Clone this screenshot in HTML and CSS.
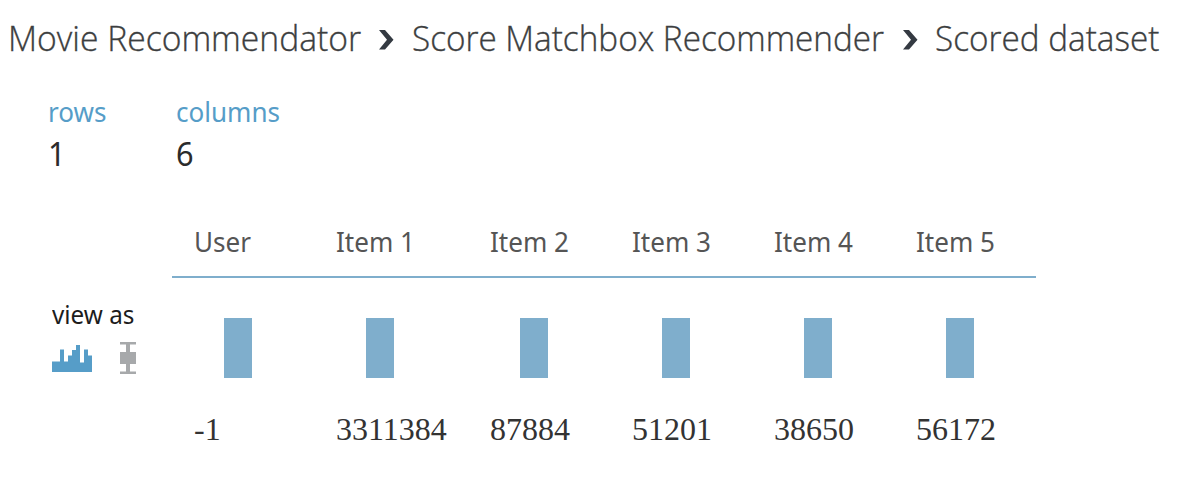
FILE: index.html
```html
<!DOCTYPE html>
<html lang="en">
<head>
<meta charset="utf-8">
<title>Scored dataset</title>
<link rel="stylesheet" href="styles.css">
</head>
<body>
<nav class="crumbs">
  <span class="crumb crumb-project"><span class="fit fit-project">Movie Recommendator</span></span>
  <svg class="chevron" viewBox="0 0 16 22"><path d="M0 1H6L14.500 10.700L6 20.500H0L8 10.700Z"/></svg>
  <span class="crumb crumb-module"><span class="fit">Score Matchbox Recommender</span></span>
  <svg class="chevron" viewBox="0 0 16 22"><path d="M0 1H6L14.500 10.700L6 20.500H0L8 10.700Z"/></svg>
  <span class="crumb"><span class="fit">Scored dataset</span></span>
</nav>
<section class="summary">
  <div class="stat"><div class="stat-label">rows</div><div class="stat-value">1</div></div>
  <div class="stat"><div class="stat-label">columns</div><div class="stat-value">6</div></div>
</section>
<main class="data">
  <aside class="view">
    <div class="view-label">view as</div>
    <div class="view-icons">
      <svg class="histogram" viewBox="0 0 40 28"><path d="M0 28V17.500H8V5.500H12V17.500H16V11.500H20V6H24V1H28V18.500H32V5.500H36V11.500H40V28Z"/></svg>
      <svg class="boxplot" viewBox="0 0 18 34"><path d="M1 1H17V3.500H11V11H17V23H11V30.500H17V33H1V30.500H7V23H1V11H7V3.500H1Z"/></svg>
    </div>
  </aside>
  <div class="table">
    <div class="row head"><span>User</span><span>Item 1</span><span>Item 2</span><span>Item 3</span><span>Item 4</span><span>Item 5</span></div>
    <div class="row bars"><i></i><i></i><i></i><i></i><i></i><i></i></div>
    <div class="row values"><span>-1</span><span>3311384</span><span>87884</span><span>51201</span><span>38650</span><span>56172</span></div>
  </div>
</main>
</body>
</html>
```
FILE: styles.css
```css
body { margin: 0; background: #fff; font-family: "Noto Sans", "Open Sans", sans-serif; color: #333; }
.crumbs { display: flex; align-items: center; height: 76px; padding-left: 8px; font: 300 35px/76px "Open Sans", "Noto Sans", sans-serif; color: #3c3e40; white-space: nowrap; -webkit-text-stroke: .35px #3c3e40; }
.crumb-project { width: 371px; }
.crumb-module { width: 492px; }
.crumb { padding-bottom: 1px; }
.fit { display: inline-block; transform-origin: 0 50%; transform: scaleX(.951); }
.fit-project { transform: scaleX(.962); }
.chevron { width: 16px; height: 22px; flex: none; margin-right: 17px; margin-top: 4px; fill: #343a42; }
.crumb-module + .chevron { margin-right: 16px; margin-left: -1px; }
.summary { display: flex; padding-left: 48px; height: 124px; }
.stat { width: 128px; padding-top: 17px; }
.stat-label { font-size: 27px; line-height: 38px; color: #569dc8; transform-origin: 0 50%; transform: scaleX(.965); }
.stat-value { font-size: 32px; line-height: 46px; color: #2b2b2b; transform-origin: 0 50%; transform: scaleX(.96); }
.data { display: flex; }
.view { box-sizing: border-box; width: 172px; padding: 96px 0 0 52px; }
.view-label { font-size: 25px; line-height: 36px; color: #1c1c1c; transform-origin: 0 50%; transform: scaleX(.97); }
.view-icons { display: flex; align-items: center; padding-top: 9px; gap: 27px; }
.histogram { width: 40px; height: 28px; fill: #569dc8; }
.boxplot { width: 18px; height: 34px; fill: #a7a9ab; }
.table { width: 864px; }
.row { display: grid; grid-template-columns: 142px 154px repeat(4, 142px); }
.head { box-sizing: border-box; height: 78px; border-bottom: 2px solid #7faecc; padding-top: 23px; font-size: 27px; line-height: 38px; color: #555; }
.row span { margin-left: 22px; }
.head span { transform-origin: 0 50%; transform: scaleX(.965); }
.bars { padding-top: 40px; }
.bars i { width: 28px; height: 60px; margin-left: 52px; background: #7faecc; }
.values { padding-top: 32px; font: 32px/38px "Liberation Serif", "Times New Roman", serif; color: #333; }
```
